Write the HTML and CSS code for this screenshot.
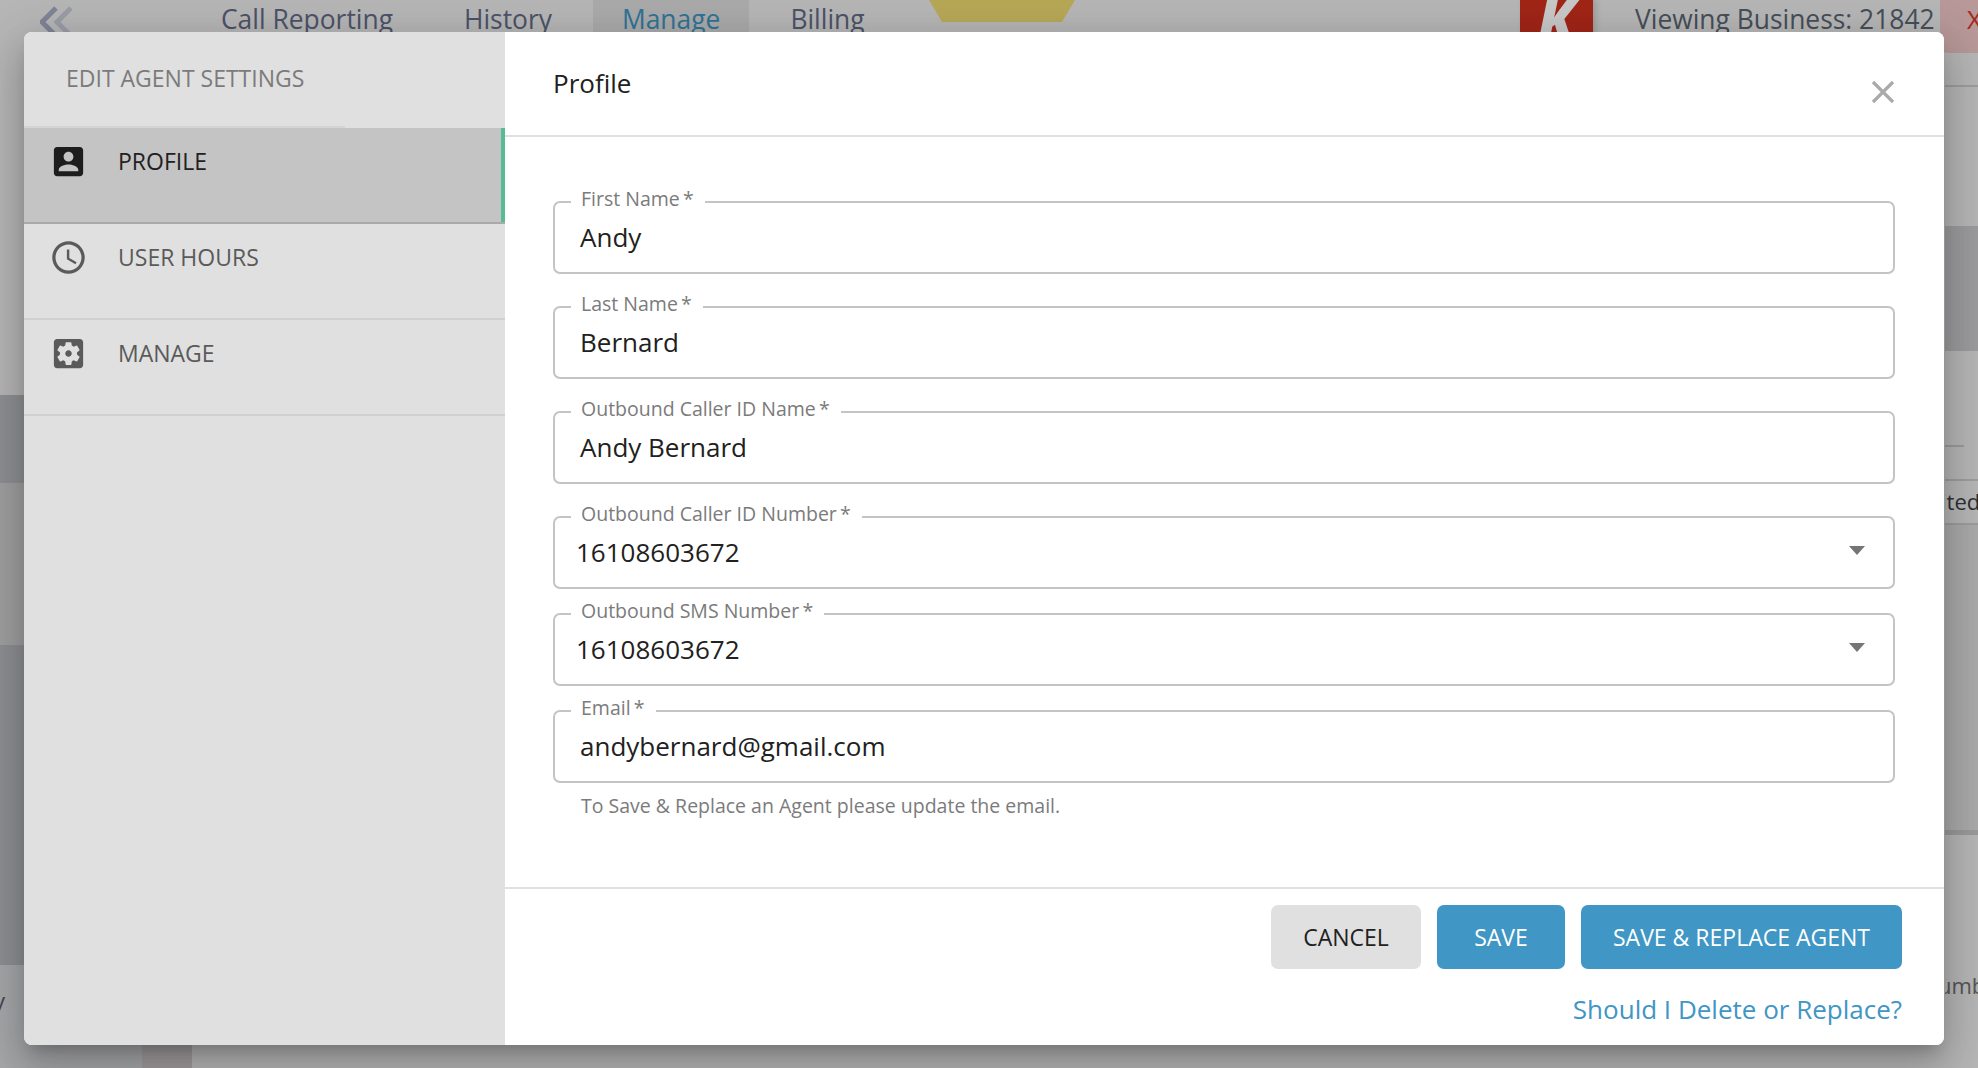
FILE: index.html
```html
<!DOCTYPE html>
<html lang="en">
<head>
<meta charset="utf-8">
<title>Edit Agent Settings</title>
<link rel="stylesheet" href="styles.css">
</head>
<body>
<div class="page">
  <header class="topbar">
    <svg class="back" viewBox="0 0 32 32" width="32" height="32" aria-hidden="true">
      <path class="back-b" d="M31 4 L17 18 L31 32" />
      <path class="back-a" d="M16 4 L2 18 L16 32" />
    </svg>
    <nav class="tabs">
      <span class="tab">Call Reporting</span>
      <span class="tab">History</span>
      <span class="tab tab-active">Manage</span>
      <span class="tab">Billing</span>
    </nav>
    <div class="badge"></div>
    <div class="logo"><span class="logo-k">K</span></div>
    <div class="viewing">Viewing Business: 21842</div>
    <div class="exit"><span>X</span></div>
  </header>
  <div class="backdrop">
    <div class="left-col">
      <div class="band band-a"></div>
      <div class="band band-b"></div>
      <div class="band band-c"></div>
      <div class="band band-d"></div>
      <div class="band band-e"><span class="frag">y</span></div>
    </div>
    <div class="right-col">
      <div class="r-a"></div>
      <div class="r-b"></div>
      <div class="r-c"><div class="r-short"></div></div>
      <div class="r-d">ited</div>
      <div class="r-e"></div>
      <div class="r-f">umber</div>
    </div>
  </div>
</div>

<section class="modal">
  <aside class="side">
    <div class="side-title">EDIT AGENT SETTINGS</div>
    <div class="side-item side-item-active">
      <svg class="side-icon" viewBox="0 0 24 24" aria-hidden="true"><path d="M3 5v14c0 1.1.89 2 2 2h14c1.1 0 2-.9 2-2V5c0-1.1-.9-2-2-2H5c-1.11 0-2 .9-2 2zm12 4c0 1.66-1.34 3-3 3s-3-1.34-3-3 1.34-3 3-3 3 1.34 3 3zm-9 8c0-2 4-3.1 6-3.1s6 1.1 6 3.1v1H6v-1z"/></svg>
      <span>PROFILE</span>
    </div>
    <div class="side-item">
      <svg class="side-icon" viewBox="0 0 24 24" aria-hidden="true"><path d="M11.99 2C6.47 2 2 6.48 2 12s4.47 10 9.99 10C17.52 22 22 17.52 22 12S17.52 2 11.99 2zM12 20c-4.42 0-8-3.58-8-8s3.58-8 8-8 8 3.58 8 8-3.58 8-8 8z"/><path d="M12.5 7H11v6l5.25 3.15.75-1.23-4.5-2.67z"/></svg>
      <span>USER HOURS</span>
    </div>
    <div class="side-item">
      <svg class="side-icon" viewBox="0 0 24 24" aria-hidden="true"><path d="M12 10c-1.1 0-2 .9-2 2s.9 2 2 2 2-.9 2-2-.9-2-2-2zm7-7H5c-1.11 0-2 .9-2 2v14c0 1.1.89 2 2 2h14c1.11 0 2-.9 2-2V5c0-1.1-.89-2-2-2zm-1.75 9c0 .23-.02.46-.05.68l1.48 1.16c.13.11.17.3.08.45l-1.4 2.42c-.09.15-.27.21-.43.15l-1.74-.7c-.36.28-.76.51-1.18.69l-.26 1.85c-.03.17-.18.3-.35.3h-2.8c-.17 0-.32-.13-.35-.29l-.26-1.85c-.43-.18-.82-.41-1.18-.69l-1.74.7c-.16.06-.34 0-.43-.15l-1.4-2.42c-.09-.15-.05-.34.08-.45l1.48-1.16c-.03-.23-.05-.46-.05-.69 0-.23.02-.46.05-.68l-1.48-1.16c-.13-.11-.17-.3-.08-.45l1.4-2.42c.09-.15.27-.21.43-.15l1.74.7c.36-.28.76-.51 1.18-.69l.26-1.85c.03-.17.18-.3.35-.3h2.8c.17 0 .32.13.35.29l.26 1.85c.43.18.82.41 1.18.69l1.74-.7c.16-.06.34 0 .43.15l1.4 2.42c.09.15.05.34-.08.45l-1.48 1.16c.03.23.05.46.05.69z"/></svg>
      <span>MANAGE</span>
    </div>
  </aside>
  <div class="main">
    <div class="main-head">
      <h2 class="main-title">Profile</h2>
      <svg class="close" viewBox="0 0 24 24" aria-hidden="true"><path d="M2 2 L22 22 M22 2 L2 22"/></svg>
    </div>
    <form class="form">
      <fieldset class="field"><legend>First Name&#8201;*</legend><div class="value">Andy</div></fieldset>
      <fieldset class="field"><legend>Last Name&#8201;*</legend><div class="value">Bernard</div></fieldset>
      <fieldset class="field"><legend>Outbound Caller ID Name&#8201;*</legend><div class="value">Andy Bernard</div></fieldset>
      <fieldset class="field field-select"><legend>Outbound Caller ID Number&#8201;*</legend><div class="value">16108603672</div><span class="caret"></span></fieldset>
      <fieldset class="field field-select field-tight"><legend>Outbound SMS Number&#8201;*</legend><div class="value">16108603672</div><span class="caret"></span></fieldset>
      <fieldset class="field field-tight"><legend>Email&#8201;*</legend><div class="value">andybernard@gmail.com</div></fieldset>
      <p class="help">To Save &amp; Replace an Agent please update the email.</p>
    </form>
    <div class="foot">
      <div class="actions">
        <button class="btn btn-plain" type="button">CANCEL</button>
        <button class="btn btn-blue btn-save" type="button">SAVE</button>
        <button class="btn btn-blue btn-replace" type="button">SAVE &amp; REPLACE AGENT</button>
      </div>
      <a class="link" href="#">Should I Delete or Replace?</a>
    </div>
  </div>
</section>
</body>
</html>
```
FILE: styles.css
```css
* { box-sizing: border-box; }
html, body { margin: 0; height: 100%; overflow: hidden; }
body {
  font-family: "Open Sans", "Liberation Sans", sans-serif;
  background: #b6b6b6;
  color: #212121;
}
.page { width: 1978px; height: 1068px; display: flex; flex-direction: column; position: relative; overflow: hidden; }

.topbar { height: 85px; flex: none; display: flex; align-items: flex-start; position: relative; }
.back { margin: 4px 0 0 40px; flex: none; fill: none; stroke-width: 5; }
.back-a { stroke: #7f8496; }
.back-b { stroke: #9a9da8; }
.tabs { display: flex; gap: 12px; width: 704px; flex: none; margin-left: 120px; font-size: 26.4px; line-height: 38px; color: #4c5268; white-space: nowrap; }
.tab { padding: 0 29px; height: 64px; }
.tab:first-child { padding-right: 30px; }
.tab-active { color: #2f7396; background: #aaaaab; }
.badge { width: 146px; height: 22px; margin-left: 33px; background: #b7a857; clip-path: polygon(0 0, 100% 0, 91% 100%, 9% 100%); flex: none; }
.logo { width: 73px; height: 64px; margin-left: 445px; background: #a02517; flex: none; box-shadow: 3px 0 6px rgba(0,0,0,.15); overflow: hidden; text-align: center; }
.logo-k { color: #c8c8c8; font-weight: 800; font-style: italic; font-size: 56px; line-height: 38px; display: block; }
.viewing { width: 305px; margin-left: 42px; font-size: 26.4px; line-height: 38px; color: #464e59; white-space: nowrap; flex: none; }
.exit { flex: 1; height: 53px; background: #b89898; border-radius: 0 0 0 8px; color: #a52a1e; font-size: 26px; line-height: 38px; padding-left: 27px; overflow: hidden; }

.backdrop { flex: 1; display: flex; justify-content: space-between; }
.left-col { width: 142px; display: flex; flex-direction: column; border-right: 50px solid #a09c9e; box-sizing: content-box; }
.band-a { height: 310px; }
.band-b { height: 88px; background: #8f9094; }
.band-c { height: 162px; background: #a0a0a0; }
.band-d { height: 320px; background: #8e8f93; }
.band-e { flex: 1; background: #a6a7a9; font-size: 22px; line-height: 40px; color: #3f4450; padding-top: 15px; overflow: hidden; }
.frag { margin-left: -6px; display: block; }

.right-col { width: 33px; display: flex; flex-direction: column; font-size: 22px; color: #2d2f33; overflow: hidden; white-space: nowrap; }
.r-a { height: 141px; border-top: 2px solid #9d9d9d; }
.r-b { height: 125px; background: #9c9c9e; }
.r-c { height: 129px; display: flex; align-items: flex-end; }
.r-short { width: 19px; height: 2px; background: #9b9b9b; margin-bottom: 33px; }
.r-d { height: 46px; border-top: 2px solid #9d9d9d; border-bottom: 2px solid #9d9d9d; line-height: 40px; text-indent: -4px; margin-top: -1px; }
.r-e { height: 310px; border-bottom: 5px solid #9a9a9a; background: #aaaaaa; }
.r-f { flex: 1; line-height: 38px; padding-top: 131px; text-indent: -7px; color: #555; }

.modal {
  position: absolute; left: 24px; top: 32px; width: 1920px; height: 1013px;
  display: flex; border-radius: 8px; background: #fff;
  box-shadow: 0 11px 15px -7px rgba(0,0,0,.2), 0 24px 38px 3px rgba(0,0,0,.14), 0 9px 46px 8px rgba(0,0,0,.12);
}
.side { width: 481px; flex: none; background: #e0e0e0; border-radius: 8px 0 0 8px; }
.side-title { height: 96px; padding: 31px 0 0 42px; font-size: 23px; line-height: 30px; color: #7b7b7b; background: linear-gradient(#d4d4d4,#d4d4d4) no-repeat 0 bottom / 321px 2px; }
.side-item { height: 96px; padding: 14px 0 0 25px; display: flex; align-items: flex-start; font-size: 23px; line-height: 39px; color: #5a5a5a; border-bottom: 2px solid #d0d0d0; }
.side-item span { margin-left: 30px; }
.side-icon { width: 39px; height: 39px; flex: none; fill: #5a5a5a; }
.side-item-active { background: #c4c4c4; color: #212121; border-bottom-color: #aaaaaa; box-shadow: inset -4px 0 0 #56bc93; }
.side-item-active .side-icon { fill: #1d1d1d; }

.main { flex: 1; display: flex; flex-direction: column; min-width: 0; border-radius: 0 8px 8px 0; background: #fff; }
.main-head { height: 105px; flex: none; border-bottom: 2px solid #e0e0e0; padding: 31px 49px 0 48px; display: flex; justify-content: space-between; align-items: flex-start; }
.main-title { margin: 0; font-size: 26px; font-weight: 400; line-height: 40px; color: #212121; }
.close { width: 24px; height: 24px; margin-top: 17px; fill: none; stroke: #aaaaaa; stroke-width: 3.2; }

.form { flex: 1; padding: 50px 49px 0 48px; }
.field { position: relative; display: block; height: 87px; margin: 0 0 18px; padding: 0 0 0 25px; border: 2px solid #c4c4c4; border-radius: 7px; min-width: 0; }
.field-tight { margin-top: -8px; }
.field legend { margin-left: -9px; padding: 0 11px 6px 10px; font-size: 19.5px; line-height: 24px; color: #7b7b7b; white-space: nowrap; }
.value { font-size: 26px; line-height: 40px; color: #212121; margin-top: 0; }
.field-select .value { margin-left: -4px; }
.caret { position: absolute; right: 28px; top: 14px; width: 0; height: 0; border-left: 8px solid transparent; border-right: 8px solid transparent; border-top: 9px solid #757575; }
.help { margin: -8px 0 0 28px; font-size: 19.5px; line-height: 26px; color: #7b7b7b; }

.foot { height: 158px; flex: none; border-top: 2px solid #e0e0e0; padding: 16px 42px 0 0; display: flex; flex-direction: column; align-items: flex-end; }
.actions { display: flex; gap: 16px; }
.btn { height: 64px; border: 0; border-radius: 7px; font-family: inherit; font-size: 23px; padding: 0; }
.btn-plain { width: 150px; background: #e0e0e0; color: #212121; }
.btn-blue { background: #4096c4; color: #fff; }
.btn-save { width: 128px; }
.btn-replace { width: 321px; }
.link { margin-top: 20px; font-size: 26px; line-height: 40px; color: #4096c4; text-decoration: none; }
```
